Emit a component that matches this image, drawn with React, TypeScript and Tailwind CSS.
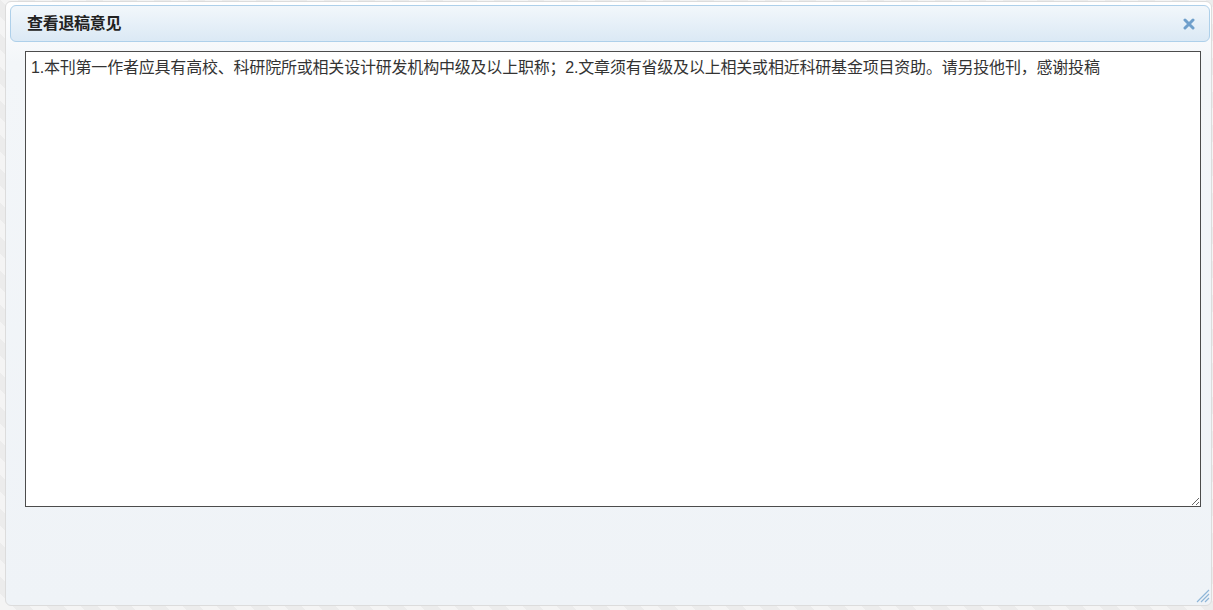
import React from "react";

const opinion =
  "1.本刊第一作者应具有高校、科研院所或相关设计研发机构中级及以上职称；2.文章须有省级及以上相关或相近科研基金项目资助。请另投他刊，感谢投稿";

function CloseIcon() {
  return (
    <svg width="12" height="12" viewBox="0 0 12 12" aria-hidden="true">
      <path d="M2 2 L10 10 M10 2 L2 10" stroke="#6f9fcb" strokeWidth="3" strokeLinecap="round" />
    </svg>
  );
}

function ResizeGrip() {
  return (
    <svg width="14" height="14" viewBox="0 0 14 14" aria-hidden="true">
      <path d="M1 13 L13 1 M5 13 L13 5 M9 13 L13 9" stroke="#8fb6d8" strokeWidth="1.2" />
    </svg>
  );
}

export default function App() {
  return (
    <div
      className="w-[1213px] h-[610px] pl-[5px] pt-[1px] pr-[1px] pb-[4px] bg-[repeating-linear-gradient(45deg,#f4f4f4_0px,#f4f4f4_12px,#ececec_12px,#ececec_24px)]"
      style={{ fontFamily: '"Liberation Sans", "Noto Sans CJK SC", sans-serif' }}
    >
      <div className="relative flex h-full flex-col rounded-[6px] border border-[#dcdcdc] bg-[linear-gradient(to_bottom,#ffffff_0px,#f3f6f9_60px,#eff3f7_100%)] pl-[4px] pr-[1px] pt-[3px]">
        {/* title bar */}
        <div className="flex h-[37px] items-center justify-between rounded-[6px] border border-[#aed0ea] bg-[linear-gradient(to_bottom,#f2f7fb,#dbe9f5)] pl-[16px] pr-[12px]">
          <span className="text-[16px] font-bold text-[#222] tracking-[-0.3px]">查看退稿意见</span>
          <button type="button" className="flex h-[16px] w-[16px] items-center justify-center">
            <CloseIcon />
          </button>
        </div>

        {/* content */}
        <div className="flex-1 pl-[15px] pr-[9px] pt-[9px]">
          <textarea
            readOnly
            defaultValue={opinion}
            className="block h-[456px] w-[1176px] resize border border-[#4c4c4c] bg-white px-[5px] pt-[4px] text-[16px] leading-6 tracking-[-0.2px] text-[#333] outline-none"
            style={{ fontFamily: '"Liberation Sans", "Noto Sans CJK SC", sans-serif' }}
          />
        </div>

        <div className="absolute bottom-[2px] right-[1px]">
          <ResizeGrip />
        </div>
      </div>
    </div>
  );
}
